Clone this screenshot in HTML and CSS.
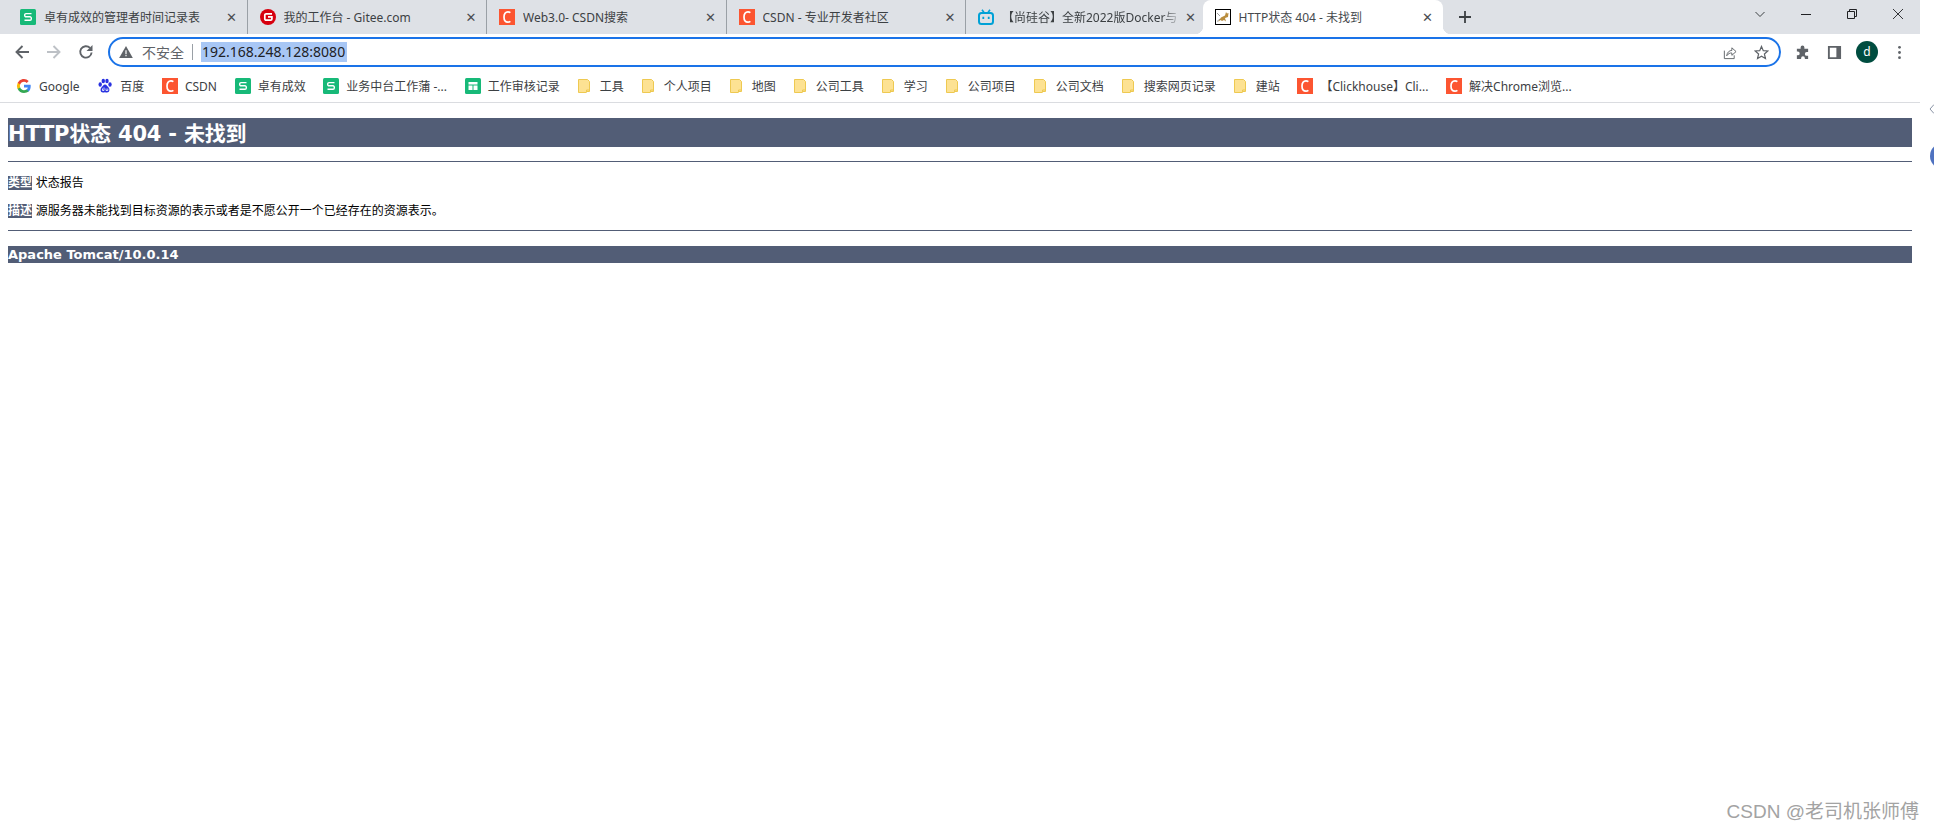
FILE: index.html
```html
<!DOCTYPE html>
<html lang="zh-CN">

<head>
    <meta charset="UTF-8">
    <title>HTTP状态 404 - 未找到</title>
    <link rel="stylesheet" href="styles.css">
</head>

<body>
    <svg class="defs" width="0" height="0">
        <symbol id="i-sheet" viewBox="0 0 16 16">
            <rect width="16" height="16" rx="1.5" fill="#17b978"/>
            <path d="M11.5 4.6H6a1.3 1.3 0 0 0-1.3 1.3v.6A1.3 1.3 0 0 0 6 7.8h4a1.3 1.3 0 0 1 1.3 1.3v.8A1.3 1.3 0 0 1 10 11.2H4.5" fill="none" stroke="#fff" stroke-width="1.4"/>
        </symbol>
        <symbol id="i-csdn" viewBox="0 0 16 16">
            <rect width="16" height="16" fill="#fc5531"/>
            <path d="M11.4 3.6C10.6 3 9.8 2.8 9 2.8c-2.6 0-4 2.2-4 5.2s1.4 5.2 4 5.2c.8 0 1.6-.2 2.4-.8" fill="none" stroke="#fff" stroke-width="1.7"/>
        </symbol>
        <symbol id="i-folder" viewBox="0 0 16 16">
            <path d="M1.500 1.500h9l2 2v10h-2.500l-1 1h-7.500z" fill="#fde293" stroke="#eec951" stroke-width="1"/>
            <path d="M9.500 14.500v-2.500h3" fill="none" stroke="#eec951" stroke-width="1"/>
        </symbol>
    </svg>

    <div class="browser">
        <div class="tabstrip">
            <div class="tab">
                <svg class="fav"><use href="#i-sheet"/></svg>
                <span class="tab-title">卓有成效的管理者时间记录表</span>
                <span class="tab-close">✕</span>
            </div>
            <div class="tab">
                <svg class="fav" viewBox="0 0 16 16">
                    <circle cx="8" cy="8" r="8" fill="#d7000f"/>
                    <path d="M12 4.800H6.200A1.300 1.300 0 0 0 4.800 6.100v3.800a1.300 1.300 0 0 0 1.400 1.300h4.500a1.200 1.200 0 0 0 1.200-1.200V7.900H8" fill="none" stroke="#fff" stroke-width="1.700"/>
                </svg>
                <span class="tab-title">我的工作台 - Gitee.com</span>
                <span class="tab-close">✕</span>
            </div>
            <div class="tab">
                <svg class="fav"><use href="#i-csdn"/></svg>
                <span class="tab-title">Web3.0- CSDN搜索</span>
                <span class="tab-close">✕</span>
            </div>
            <div class="tab">
                <svg class="fav"><use href="#i-csdn"/></svg>
                <span class="tab-title">CSDN - 专业开发者社区</span>
                <span class="tab-close">✕</span>
            </div>
            <div class="tab">
                <svg class="fav" viewBox="0 0 16 16">
                    <rect x="1" y="4" width="14" height="11" rx="2.500" fill="none" stroke="#00a1d6" stroke-width="2"/>
                    <path d="M4 .8 6 3.500M12 .8 10 3.500" stroke="#00a1d6" stroke-width="1.600"/>
                    <path d="M5.300 7.800v2.200M10.700 7.800v2.200" stroke="#00a1d6" stroke-width="1.800"/>
                </svg>
                <span class="tab-title tab-fade">【尚硅谷】全新2022版Docker与</span>
                <span class="tab-close">✕</span>
            </div>
            <div class="tab tab-active">
                <svg class="fav" viewBox="0 0 16 16">
                    <rect x=".5" y=".5" width="15" height="15" fill="#fff" stroke="#000"/>
                    <path d="M3 13 6 8.500 10 6.500 11 3l1 1.500 1.500-.5-.5 4-3 1 1 3.500-2-1.500-2 1-1.500-1z" fill="#b98d3e"/>
                    <path d="M2 12.500 5 10M2 4l3 3" stroke="#777" stroke-width=".7"/>
                </svg>
                <span class="tab-title">HTTP状态 404 - 未找到</span>
                <span class="tab-close">✕</span>
            </div>
            <svg class="new-tab" viewBox="0 0 12 12">
                <path d="M6 0v12M0 6h12" stroke="#3c4043" stroke-width="1.800"/>
            </svg>
            <div class="win-btns">
                <svg viewBox="0 0 10 10"><path d="M.500 3 5 7.500 9.500 3" fill="none" stroke="#3c4043"/></svg>
                <svg viewBox="0 0 10 10"><path d="M0 5.500h10" stroke="#202124"/></svg>
                <svg viewBox="0 0 10 10"><path d="M.500 2.500h7v7h-7zM2.500 2.500v-2h7v7h-2" fill="none" stroke="#202124"/></svg>
                <svg viewBox="0 0 10 10"><path d="M0 0l10 10M10 0 0 10" stroke="#202124" stroke-width=".9"/></svg>
            </div>
        </div>

        <div class="toolbar">
            <svg class="nav-icon" viewBox="0 0 16 16"><path d="M15 8H2.500M8.500 2 2.500 8l6 6" fill="none" stroke="#5f6368" stroke-width="1.900"/></svg>
            <svg class="nav-icon" viewBox="0 0 16 16"><path d="M1 8h12.500M7.500 2l6 6-6 6" fill="none" stroke="#bdc1c6" stroke-width="1.900"/></svg>
            <svg class="nav-icon" viewBox="0 0 16 16">
                <path d="M13.600 8.500A5.700 5.700 0 1 1 12 3.900" fill="none" stroke="#5f6368" stroke-width="1.900"/>
                <path d="M14.500 1v6h-6z" fill="#5f6368"/>
            </svg>
            <div class="omnibox">
                <svg class="warn" viewBox="0 0 16 14"><path d="M8 0 16 14H0z" fill="#5f6368"/><path d="M8 5v4.500M8 10.500v1.500" stroke="#fff" stroke-width="1.400"/></svg>
                <span class="insecure">不安全</span>
                <span class="omni-sep"></span>
                <span class="url">192.168.248.128:8080</span>
                <svg class="omni-icon share" viewBox="0 0 16 16">
                    <path d="M2.500 6v8.500h10.500V11" fill="none" stroke="#5f6368"/>
                    <path d="M5 11.500C5.500 7.500 8 5.800 10.500 5.800V3l4.500 4-4.500 4V8.500C8.500 8.300 6.500 9.300 5 11.500z" fill="none" stroke="#5f6368"/>
                </svg>
                <svg class="omni-icon" viewBox="0 0 16 16"><path d="M8 1.500 9.900 6l4.900.4-3.700 3.200 1.100 4.800L8 11.900l-4.200 2.500 1.100-4.800L1.200 6.400 6.100 6z" fill="none" stroke="#5f6368" stroke-width="1.300"/></svg>
            </div>
            <div class="tool-btns">
                <svg viewBox="0 0 16 16"><path d="M6 2.500a2 2 0 0 1 4 0V4h4v3.500h-1.500a2 2 0 0 0 0 4H14V15h-3.500v-1a2 2 0 0 0-4 0v1H2v-4h1a2 2 0 0 0 0-4H2V4h4z" fill="#5f6368"/></svg>
                <svg viewBox="0 0 16 16"><path d="M2 2h12v12H2z" fill="none" stroke="#5f6368" stroke-width="2"/><path d="M10 2h4v12h-4z" fill="#5f6368"/></svg>
                <span class="avatar">d</span>
                <svg viewBox="0 0 16 16"><circle cx="8" cy="2.500" r="1.500" fill="#5f6368"/><circle cx="8" cy="8" r="1.500" fill="#5f6368"/><circle cx="8" cy="13.500" r="1.500" fill="#5f6368"/></svg>
            </div>
        </div>

        <div class="bookmarks">
            <a class="bm">
                <svg class="fav" viewBox="0 0 16 16">
                    <path d="M14.700 8.200c0-.5 0-1-.1-1.400H8v2.700h3.800a3.200 3.200 0 0 1-1.400 2.100v1.800h2.300c1.300-1.300 2-3 2-5.200z" fill="#4285f4"/>
                    <path d="M8 15c1.900 0 3.500-.6 4.700-1.700l-2.300-1.800c-.6.400-1.400.7-2.400.7-1.800 0-3.400-1.200-3.900-2.900H1.700V11A7 7 0 0 0 8 15z" fill="#34a853"/>
                    <path d="M4.100 9.300a4.200 4.200 0 0 1 0-2.700V4.800H1.700a7 7 0 0 0 0 6.300z" fill="#fbbc05"/>
                    <path d="M8 3.800c1 0 2 .4 2.700 1.100l2-2A7 7 0 0 0 1.700 4.800l2.400 1.800C4.600 5 6.200 3.800 8 3.800z" fill="#ea4335"/>
                </svg>Google</a>
            <a class="bm">
                <svg class="fav" viewBox="0 0 16 16" fill="#2932e1">
                    <ellipse cx="3.200" cy="6.500" rx="1.700" ry="2.200"/>
                    <ellipse cx="6.300" cy="3" rx="1.700" ry="2.300"/>
                    <ellipse cx="10" cy="3" rx="1.700" ry="2.300"/>
                    <ellipse cx="13" cy="6.500" rx="1.700" ry="2.200"/>
                    <path d="M8 6.500c-1.800 0-2.300 2-3.500 3-1.500 1.300-1.300 5 1.500 5 1 0 1.300-.3 2-.3s1.200.3 2 .3c2.800 0 3-3.700 1.500-5-1.200-1-1.700-3-3.500-3z"/>
                    <path d="M5.500 10.500v2h1.500v-3M9 10.500v2h1.800v-2" fill="none" stroke="#fff" stroke-width=".8"/>
                </svg>百度</a>
            <a class="bm"><svg class="fav"><use href="#i-csdn"/></svg>CSDN</a>
            <a class="bm"><svg class="fav"><use href="#i-sheet"/></svg>卓有成效</a>
            <a class="bm"><svg class="fav"><use href="#i-sheet"/></svg>业务中台工作蒲 -...</a>
            <a class="bm">
                <svg class="fav" viewBox="0 0 16 16">
                    <rect width="16" height="16" rx="1.500" fill="#17b978"/>
                    <path d="M3.500 4h9v2.500h-9zM3.500 7.500h4V12h-4zM8.500 7.500h4V12h-4z" fill="#fff"/>
                </svg>工作审核记录</a>
            <a class="bm bm-folder"><svg class="fav"><use href="#i-folder"/></svg>工具</a>
            <a class="bm bm-folder"><svg class="fav"><use href="#i-folder"/></svg>个人项目</a>
            <a class="bm bm-folder"><svg class="fav"><use href="#i-folder"/></svg>地图</a>
            <a class="bm bm-folder"><svg class="fav"><use href="#i-folder"/></svg>公司工具</a>
            <a class="bm bm-folder"><svg class="fav"><use href="#i-folder"/></svg>学习</a>
            <a class="bm bm-folder"><svg class="fav"><use href="#i-folder"/></svg>公司项目</a>
            <a class="bm bm-folder"><svg class="fav"><use href="#i-folder"/></svg>公司文档</a>
            <a class="bm bm-folder"><svg class="fav"><use href="#i-folder"/></svg>搜索网页记录</a>
            <a class="bm bm-folder"><svg class="fav"><use href="#i-folder"/></svg>建站</a>
            <a class="bm"><svg class="fav"><use href="#i-csdn"/></svg>【Clickhouse】Cli...</a>
            <a class="bm"><svg class="fav"><use href="#i-csdn"/></svg>解决Chrome浏览...</a>
        </div>

        <main class="page">
            <h1>HTTP状态 404 - 未找到</h1>
            <hr class="line">
            <p><b>类型</b> 状态报告</p>
            <p class="last"><b>描述</b> 源服务器未能找到目标资源的表示或者是不愿公开一个已经存在的资源表示。</p>
            <hr class="line">
            <h3>Apache Tomcat/10.0.14</h3>
        </main>
    </div>

    <svg class="side-chevron" viewBox="0 0 6 10"><path d="M5 .5 1 5l4 4.500" fill="none" stroke="#8a94a6"/></svg>
    <span class="side-ball"></span>
    <div class="watermark">CSDN @老司机张师傅</div>
</body>

</html>
```

FILE: styles.css
```css
html,
body {
    margin: 0;
    padding: 0;
    height: 830px;
    overflow: hidden;
    background: #fff;
}

body {
    font-family: "Noto Sans", "Noto Sans CJK SC", sans-serif;
    position: relative;
}

.defs {
    position: absolute;
}

.browser {
    width: 1920px;
}

.fav {
    width: 16px;
    height: 16px;
    flex: none;
}

/* tab strip */
.tabstrip {
    display: flex;
    align-items: center;
    height: 34px;
    padding-left: 8px;
    background: #dee1e6;
    font-size: 12px;
    color: #3c4043;
}

.tab {
    position: relative;
    display: flex;
    align-items: center;
    box-sizing: border-box;
    width: 239.5px;
    height: 34px;
    padding: 0 7px 0 12px;
    border-right: 1px solid #9aa0a6;
    background-clip: content-box;
}

.tab:nth-child(5),
.tab-active {
    border-right: none;
}

.tab-active {
    background: #fff;
    border-radius: 8px 8px 0 0;
    color: #45494d;
    width: 240px;
    margin-left: -3px;
    background-clip: border-box;
}

/* concave corners where the active tab meets the strip */
.tab-active::before,
.tab-active::after {
    content: "";
    position: absolute;
    bottom: 0;
    width: 8px;
    height: 8px;
}

.tab-active::before {
    left: -8px;
    background: radial-gradient(circle at 0 0, #dee1e6 8px, #fff 8.5px);
}

.tab-active::after {
    right: -8px;
    background: radial-gradient(circle at 100% 0, #dee1e6 8px, #fff 8.5px);
}

.tab-title {
    flex: 1;
    margin-left: 8px;
    white-space: nowrap;
    overflow: hidden;
}

.tab-fade {
    -webkit-mask-image: linear-gradient(to right, #000 88%, transparent);
    mask-image: linear-gradient(to right, #000 88%, transparent);
}

.tab-close {
    width: 16px;
    text-align: center;
    font: bold 13px "DejaVu Sans", sans-serif;
    color: #4a4d51;
}

.new-tab {
    width: 12px;
    height: 12px;
    margin-left: 16px;
}

.win-btns {
    display: flex;
    align-items: center;
    gap: 36px;
    margin-left: auto;
    margin-right: 17px;
    margin-top: -6px;
}

.win-btns svg {
    width: 10px;
    height: 10px;
}

/* toolbar */
.toolbar {
    display: flex;
    align-items: center;
    height: 36px;
    padding-left: 14px;
    box-sizing: border-box;
}

.nav-icon {
    width: 16px;
    height: 16px;
    margin-right: 16px;
}

.omnibox {
    display: flex;
    align-items: center;
    box-sizing: border-box;
    width: 1673px;
    height: 30px;
    margin-left: -2px;
    padding: 0 10px 0 9px;
    border: 2px solid #1a73e8;
    border-radius: 15px;
    font-size: 14px;
    color: #5f6368;
}

.warn {
    width: 14px;
    height: 12px;
}

.insecure {
    margin-left: 9px;
    white-space: nowrap;
}

.omni-sep {
    width: 1px;
    height: 16px;
    margin: 0 8px;
    background: #9aa0a6;
}

.url {
    padding: 0 2px 0 1px;
    background: #a8c7f5;
    color: #202124;
    font-size: 14px;
    line-height: 20px;
    margin-right: auto;
}

.omni-icon {
    width: 15px;
    height: 15px;
    margin-left: 17px;
}

.tool-btns {
    display: flex;
    align-items: center;
    margin-left: 14px;
    gap: 17px;
}

.tool-btns svg {
    width: 15px;
    height: 15px;
}

.avatar {
    width: 22px;
    height: 22px;
    margin: 0 -3px;
    border-radius: 50%;
    background: #004d40;
    color: #fff;
    font-size: 12px;
    line-height: 21px;
    text-align: center;
}

/* bookmarks */
.bookmarks {
    display: flex;
    align-items: center;
    gap: 17.7px;
    height: 32px;
    padding-left: 16px;
    border-bottom: 1px solid #dadce0;
    font-size: 12px;
    color: #3c4043;
}

.bm {
    display: flex;
    align-items: center;
    gap: 7px;
    white-space: nowrap;
}

.bm-folder {
    gap: 6.3px;
}

/* tomcat page */
.page {
    padding: 0 8px;
    font-family: "DejaVu Sans", "Noto Sans CJK SC", sans-serif;
    color: #000;
}

.page h1 {
    margin: 15px 0 14px;
    height: 29px;
    background: #525d76;
    color: #fff;
    font-size: 21px;
    letter-spacing: -0.2px;
    line-height: 32px;
}

.line {
    height: 1px;
    margin: 0;
    border: none;
    background: #525d76;
}

.page p {
    margin: 14px 0;
    font-size: 12px;
    line-height: 14px;
}

.page p.last {
    margin-bottom: 12px;
}

.page p b {
    background: #525d76;
    color: #fff;
}

.page h3 {
    margin: 15px 0 0;
    height: 17px;
    background: #525d76;
    color: #fff;
    font-size: 13px;
    line-height: 17px;
}

/* things past the window edge */
.side-chevron {
    position: absolute;
    left: 1929px;
    top: 104px;
    width: 6px;
    height: 10px;
}

.side-ball {
    position: absolute;
    left: 1930px;
    top: 143px;
    width: 26px;
    height: 26px;
    border-radius: 50%;
    background: #4f72c0;
}

.watermark {
    position: absolute;
    right: 15px;
    bottom: 7px;
    font-family: "Liberation Sans", "Noto Sans CJK SC", sans-serif;
    font-size: 19px;
    color: #a3a3a3;
}
```
